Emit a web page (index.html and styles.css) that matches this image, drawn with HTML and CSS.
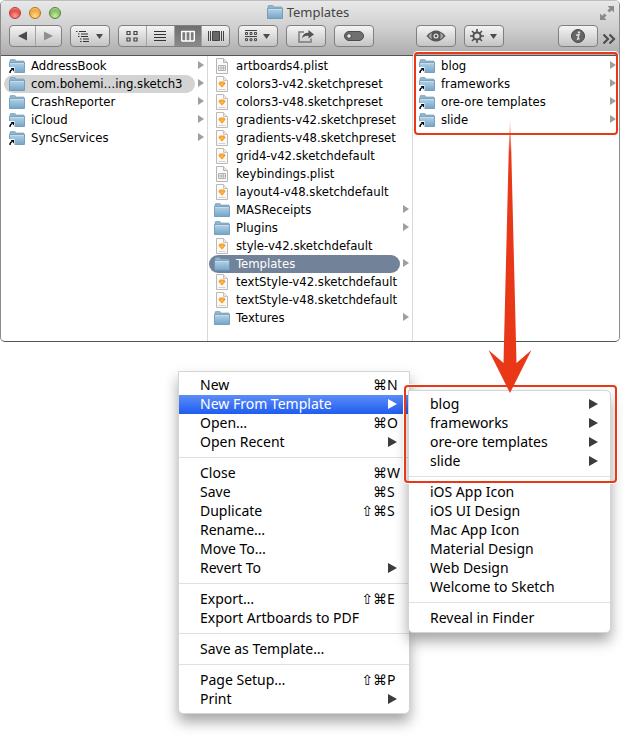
FILE: index.html
```html
<!DOCTYPE html>
<html lang="en">
<head>
    <meta charset="UTF-8">
    <meta name="viewport" content="width=device-width, initial-scale=1.0">
    <title>Templates</title>
    <link rel="stylesheet" href="styles.css">
</head>
<body>

<!-- Shared icons -->
<svg class="icon-defs" aria-hidden="true">
    <defs>
        <linearGradient id="folderFill" x1="0" y1="0" x2="0" y2="1">
            <stop offset="0" stop-color="#b4d3e8"/>
            <stop offset="1" stop-color="#74a5c8"/>
        </linearGradient>
        <linearGradient id="arrowFade" x1="0" y1="0" x2="0" y2="1">
            <stop offset="0" stop-color="#e83817" stop-opacity="0"/>
            <stop offset="0.12" stop-color="#e83817"/>
        </linearGradient>
        <symbol id="folder" viewBox="0 0 16 16">
            <path d="M1 4V2.5Q1 1.5 2 1.5H5.5Q6.5 1.5 6.5 2.5V3H14.5Q15.2 3 15.2 4V6H1Z" fill="#8fb6d1" stroke="#6d94b0" stroke-width="0.6"/>
            <path d="M0.5 4.6H15.5V14.5H0.5Z" fill="url(#folderFill)" stroke="#6791b0" stroke-width="0.8"/>
            <path d="M1 5.4H15" stroke="#cfe3f1" stroke-width="0.8"/>
        </symbol>
        <symbol id="folder-alias" viewBox="0 0 16 16">
            <use href="#folder"/>
            <path d="M0 9H5.5V16H0Z" fill="#fff"/>
            <path d="M1 15Q0.8 12.5 3 11.6" fill="none" stroke="#000" stroke-width="1.4"/>
            <path d="M1.6 10H5V13.6Z" fill="#000"/>
        </symbol>
        <symbol id="plist" viewBox="0 0 16 16">
            <path d="M2.5 0.5H9.5L13.5 4.5V15.5H2.5Z" fill="#fafafa" stroke="#b5b5b5"/>
            <path d="M9.5 0.5V4.5H13.5" fill="#e4e4e4" stroke="#b5b5b5"/>
            <path d="M4.5 7.5H11.5V12.5H4.5ZM4.5 10H11.5M7 7.5V12.5M9.3 7.5V12.5" fill="none" stroke="#b0b0b0"/>
        </symbol>
        <symbol id="sketch" viewBox="0 0 16 16">
            <path d="M2.5 0.5H9.5L13.5 4.5V15.5H2.5Z" fill="#fafafa" stroke="#b9b9b9"/>
            <path d="M9.5 0.5V4.5H13.5" fill="#e9e9e9" stroke="#c4c4c4"/>
            <path d="M5.8 5.5H10.2L11.7 7.6L8 11.8L4.3 7.6Z" fill="#f5a22d"/>
            <path d="M6.3 7.4H9.7L8 9.8Z" fill="#fbc467"/>
            <path d="M4.5 13.5H11.5" stroke="#d2d2d2"/>
        </symbol>
    </defs>
</svg>

<!-- Finder window -->
<section class="finder">
    <header class="finder-head">
        <div class="title-bar">
            <div class="lights">
                <button class="light red" aria-label="Close window"></button>
                <button class="light yellow" aria-label="Minimize"></button>
                <button class="light green" aria-label="Zoom"></button>
            </div>
            <h1 class="title"><svg class="icon"><use href="#folder"/></svg>Templates</h1>
            <button class="fullscreen" aria-label="Full screen">
                <svg width="16" height="16" viewBox="0 0 16 16">
                    <path d="M8.5 1H15V7.5L12.8 5.3L10.5 7.6L8.4 5.5L10.7 3.2ZM7.5 15H1V8.5L3.2 10.7L5.5 8.4L7.6 10.5L5.3 12.8Z" fill="#8a8a8a"/>
                </svg>
            </button>
        </div>
        <div class="toolbar">
            <div class="group nav">
                <button aria-label="Back"><svg width="9" height="10" viewBox="0 0 9 10"><path d="M9 0.5V9.5L0 5Z" fill="#4b4b4b"/></svg></button>
                <button aria-label="Forward"><svg width="9" height="10" viewBox="0 0 9 10"><path d="M0 0.5V9.5L9 5Z" fill="#8f8f8f"/></svg></button>
            </div>
            <div class="group">
                <button aria-label="Path">
                    <svg width="28" height="12" viewBox="0 0 28 12">
                        <path d="M0 1.5H1.5M3 1.5H10M2 4H3.5M5 4H12M2 6.5H3.5M5 6.5H12M4 9H5.5M7 9H13M4 11.5H5.5M7 11.5H13" stroke="#333" stroke-width="1"/>
                        <path d="M20 4H27L23.5 9Z" fill="#4b4b4b"/>
                    </svg>
                </button>
            </div>
            <div class="group views">
                <button aria-label="Icons">
                    <svg width="12" height="12" viewBox="0 0 12 12"><path d="M1 1.5H4V4.5H1ZM8 1.5H11V4.5H8ZM1 8H4V11H1ZM8 8H11V11H8Z" fill="none" stroke="#444" stroke-width="1.2"/></svg>
                </button>
                <button aria-label="List">
                    <svg width="12" height="12" viewBox="0 0 12 12"><path d="M0 1.5H12M0 4.5H12M0 7.5H12M0 10.5H12" stroke="#333"/></svg>
                </button>
                <button class="active" aria-label="Columns">
                    <svg width="14" height="12" viewBox="0 0 14 12"><path d="M0.7 1.5H13.3M0.7 11H13.3M0.7 1V11M4.9 1V11M9.1 1V11M13.3 1V11" fill="none" stroke="#fff" stroke-width="1.4"/></svg>
                </button>
                <button aria-label="Cover Flow">
                    <svg width="16" height="12" viewBox="0 0 16 12"><path d="M0.5 1V11M2.5 1V11M13.5 1V11M15.5 1V11" stroke="#444"/><path d="M4.5 1.5H11.5V10.5H4.5Z" fill="#666" stroke="#444"/></svg>
                </button>
            </div>
            <div class="group">
                <button aria-label="Arrange">
                    <svg width="26" height="12" viewBox="0 0 26 12">
                        <path d="M0 0.5H12M0 6.5H12" stroke="#444"/>
                        <path d="M0.5 2.5H2.5V4.5H0.5ZM5 2.5H7V4.5H5ZM9.5 2.5H11.5V4.5H9.5ZM0.5 8.7H2.5V10.7H0.5ZM5 8.7H7V10.7H5ZM9.5 8.7H11.5V10.7H9.5Z" fill="none" stroke="#444"/>
                        <path d="M18 4H25L21.5 9Z" fill="#4b4b4b"/>
                    </svg>
                </button>
            </div>
            <div class="group">
                <button aria-label="Share">
                    <svg width="16" height="14" viewBox="0 0 16 14">
                        <path d="M6 3H1V13H13V9.5" fill="none" stroke="#7b7b7b" stroke-width="1.5"/>
                        <path d="M4 9.5Q4.5 3.7 10.5 3.7V1L16 5.4L10.5 9.4V6.8Q6 6.5 4 9.5Z" fill="#555"/>
                    </svg>
                </button>
            </div>
            <div class="group">
                <button aria-label="Tags">
                    <svg width="20" height="10" viewBox="0 0 20 10">
                        <rect x="0.5" y="0.5" width="19" height="9" rx="4.5" fill="#707070" stroke="#4b4b4b"/>
                        <circle cx="5" cy="5" r="2.3" fill="#eee" stroke="#4b4b4b"/>
                    </svg>
                </button>
            </div>
            <div class="group quick-look">
                <button aria-label="Quick Look">
                    <svg width="20" height="12" viewBox="0 0 20 12">
                        <path d="M0.5 6Q10 -5 19.5 6Q10 17 0.5 6Z" fill="#555"/>
                        <path d="M2.5 6Q4 3.8 6 2.8Q4.6 6 6 9.2Q4 8.2 2.5 6ZM17.5 6Q16 3.8 14 2.8Q15.4 6 14 9.2Q16 8.2 17.5 6Z" fill="#a9a9a9"/>
                        <circle cx="10" cy="6" r="2.6" fill="#d8d8d8"/>
                        <circle cx="10" cy="6" r="1.3" fill="#555"/>
                    </svg>
                </button>
            </div>
            <div class="group">
                <button aria-label="Action">
                    <svg width="28" height="14" viewBox="0 0 28 14">
                        <circle cx="7" cy="7" r="3.6" fill="none" stroke="#505050" stroke-width="2"/>
                        <path d="M7 0V3M7 11V14M0 7H3M11 7H14M2 2L4.2 4.2M9.8 9.8L12 12M12 2L9.8 4.2M4.2 9.8L2 12" stroke="#505050" stroke-width="1.6"/>
                        <path d="M20 5H27L23.5 10Z" fill="#4b4b4b"/>
                    </svg>
                </button>
            </div>
            <div class="group info">
                <button aria-label="Get Info">
                    <svg width="14" height="14" viewBox="0 0 14 14">
                        <circle cx="7" cy="7" r="6.5" fill="#656565" stroke="#4a4a4a"/>
                        <circle cx="8" cy="3.4" r="1.2" fill="#ddd"/>
                        <path d="M5 6.2L8 5.6L6.6 10.2L8.6 9.6" fill="none" stroke="#ddd" stroke-width="1.4"/>
                    </svg>
                </button>
            </div>
            <button class="more" aria-label="More">
                <svg width="14" height="10" viewBox="0 0 14 10"><path d="M1.5 0.5L6 5L1.5 9.5M7.5 0.5L12 5L7.5 9.5" fill="none" stroke="#4f4f4f" stroke-width="2.2"/></svg>
            </button>
        </div>
    </header>

    <div class="columns">
        <ul class="column">
            <li class="has-children"><a href="#"><svg class="icon"><use href="#folder-alias"/></svg>AddressBook</a></li>
            <li class="has-children open"><a href="#"><svg class="icon"><use href="#folder"/></svg>com.bohemi…ing.sketch3</a></li>
            <li class="has-children"><a href="#"><svg class="icon"><use href="#folder"/></svg>CrashReporter</a></li>
            <li class="has-children"><a href="#"><svg class="icon"><use href="#folder-alias"/></svg>iCloud</a></li>
            <li class="has-children"><a href="#"><svg class="icon"><use href="#folder-alias"/></svg>SyncServices</a></li>
        </ul>
        <ul class="column">
            <li><a href="#"><svg class="icon"><use href="#plist"/></svg>artboards4.plist</a></li>
            <li><a href="#"><svg class="icon"><use href="#sketch"/></svg>colors3-v42.sketchpreset</a></li>
            <li><a href="#"><svg class="icon"><use href="#sketch"/></svg>colors3-v48.sketchpreset</a></li>
            <li><a href="#"><svg class="icon"><use href="#sketch"/></svg>gradients-v42.sketchpreset</a></li>
            <li><a href="#"><svg class="icon"><use href="#sketch"/></svg>gradients-v48.sketchpreset</a></li>
            <li><a href="#"><svg class="icon"><use href="#sketch"/></svg>grid4-v42.sketchdefault</a></li>
            <li><a href="#"><svg class="icon"><use href="#plist"/></svg>keybindings.plist</a></li>
            <li><a href="#"><svg class="icon"><use href="#sketch"/></svg>layout4-v48.sketchdefault</a></li>
            <li class="has-children"><a href="#"><svg class="icon"><use href="#folder"/></svg>MASReceipts</a></li>
            <li class="has-children"><a href="#"><svg class="icon"><use href="#folder"/></svg>Plugins</a></li>
            <li><a href="#"><svg class="icon"><use href="#sketch"/></svg>style-v42.sketchdefault</a></li>
            <li class="has-children selected"><a href="#"><svg class="icon"><use href="#folder"/></svg>Templates</a></li>
            <li><a href="#"><svg class="icon"><use href="#sketch"/></svg>textStyle-v42.sketchdefault</a></li>
            <li><a href="#"><svg class="icon"><use href="#sketch"/></svg>textStyle-v48.sketchdefault</a></li>
            <li class="has-children"><a href="#"><svg class="icon"><use href="#folder"/></svg>Textures</a></li>
        </ul>
        <div class="column last">
            <ul class="marked">
                <li class="has-children"><a href="#"><svg class="icon"><use href="#folder-alias"/></svg>blog</a></li>
                <li class="has-children"><a href="#"><svg class="icon"><use href="#folder-alias"/></svg>frameworks</a></li>
                <li class="has-children"><a href="#"><svg class="icon"><use href="#folder-alias"/></svg>ore-ore templates</a></li>
                <li class="has-children"><a href="#"><svg class="icon"><use href="#folder-alias"/></svg>slide</a></li>
            </ul>
            <!-- Arrow from the folder list to the submenu -->
            <svg class="arrow" width="44" height="274" viewBox="0 0 44 274" aria-hidden="true">
                <path d="M21.5 0H22.5L28.5 243L43.5 230L22 273L0.5 230L15.5 243Z" fill="url(#arrowFade)"/>
            </svg>
        </div>
    </div>
</section>

<!-- File menu -->
<nav class="menu file-menu">
    <ul>
        <li><button>New <kbd>⌘<b>N</b></kbd></button></li>
        <li class="current">
            <button class="more-items">New From Template</button>
            <div class="menu submenu">
                <ul class="marked">
                    <li><button class="more-items">blog</button></li>
                    <li><button class="more-items">frameworks</button></li>
                    <li><button class="more-items">ore-ore templates</button></li>
                    <li><button class="more-items">slide</button></li>
                </ul>
                <ul>
                    <li><button>iOS App Icon</button></li>
                    <li><button>iOS UI Design</button></li>
                    <li><button>Mac App Icon</button></li>
                    <li><button>Material Design</button></li>
                    <li><button>Web Design</button></li>
                    <li><button>Welcome to Sketch</button></li>
                </ul>
                <ul>
                    <li><button>Reveal in Finder</button></li>
                </ul>
            </div>
        </li>
        <li><button>Open… <kbd>⌘<b>O</b></kbd></button></li>
        <li><button class="more-items">Open Recent</button></li>
    </ul>
    <ul>
        <li><button>Close <kbd>⌘<b>W</b></kbd></button></li>
        <li><button>Save <kbd>⌘<b>S</b></kbd></button></li>
        <li><button>Duplicate <kbd>⇧⌘<b>S</b></kbd></button></li>
        <li><button>Rename…</button></li>
        <li><button>Move To…</button></li>
        <li><button class="more-items">Revert To</button></li>
    </ul>
    <ul>
        <li><button>Export… <kbd>⇧⌘<b>E</b></kbd></button></li>
        <li><button>Export Artboards to PDF</button></li>
    </ul>
    <ul>
        <li><button>Save as Template…</button></li>
    </ul>
    <ul>
        <li><button>Page Setup… <kbd>⇧⌘<b>P</b></kbd></button></li>
        <li><button class="more-items">Print</button></li>
    </ul>
</nav>

</body>
</html>
```

FILE: styles.css
```css
/* General */
* {
    box-sizing: border-box;
}

body {
    margin: 0;
    background-color: #fff;
    color: #000;
    font-family: "Lucida Grande", "Noto Sans", "Open Sans", sans-serif;
    font-size: 13px;
}

ul {
    list-style: none;
    margin: 0;
    padding: 0;
}

button {
    border: none;
    padding: 0;
    background: none;
    color: inherit;
    font: inherit;
}

a {
    color: inherit;
    text-decoration: none;
}

.icon-defs {
    display: block;
    width: 0;
    height: 0;
}

.icon {
    width: 16px;
    height: 16px;
    flex: none;
}

/* Finder window */
.finder {
    margin-right: 4px;
    border: 1px solid #8c8c8c;
    border-top-color: #bdbdbd;
    border-bottom-color: #555;
    border-radius: 5px;
    background-color: #fff;
}

.finder-head {
    height: 55px;
    border-bottom: 1px solid #555;
    border-radius: 4px 4px 0 0;
    background: linear-gradient(#e8e8e8, #cfcfcf 50%, #adadad);
}

.title-bar {
    display: grid;
    grid-template-columns: 1fr auto 1fr;
    align-items: center;
    height: 23px;
    padding: 0 4px 0 0;
}

.lights {
    display: flex;
    gap: 8px;
    margin-left: 8px;
}

.light {
    width: 12px;
    height: 12px;
    border: 1px solid #777;
    border-radius: 50%;
}

.light.red {
    border-color: #a5423c;
    background: radial-gradient(circle at 50% 80%, #ff9c92, #e8493f 60%, #f7b5ae);
}

.light.yellow {
    border-color: #a9742c;
    background: radial-gradient(circle at 50% 80%, #ffdc8a, #f0a63a 60%, #fbdcaa);
}

.light.green {
    border-color: #557f3b;
    background: radial-gradient(circle at 50% 80%, #c5eea0, #7fbd5c 60%, #cfe8bd);
}

.title {
    display: flex;
    align-items: center;
    gap: 4px;
    margin: 0;
    padding-bottom: 1px;
    color: #444;
    font-size: 13px;
    font-weight: normal;
    line-height: 18px;
}

.fullscreen {
    justify-self: end;
    height: 16px;
}

.toolbar {
    display: flex;
    gap: 8px;
    padding: 1px 3px 0 8px;
}

.group {
    display: flex;
    width: 40px;
    height: 22px;
    border: 1px solid #808080;
    border-radius: 4px;
    background: linear-gradient(#f4f4f4, #c4c4c4);
    overflow: hidden;
}

.group button {
    display: flex;
    flex: 1;
    align-items: center;
    justify-content: center;
}

.group button + button {
    border-left: 1px solid #a2a2a2;
}

.nav {
    width: 53px;
}

.views {
    width: 112px;
}

.group .active {
    background: linear-gradient(#6f6f6f, #8a8a8a);
}

.quick-look {
    margin-left: 34px;
}

.info {
    margin-left: auto;
}

.more {
    display: flex;
    align-items: center;
    margin-left: -4px;
    padding-top: 6px;
}

/* Column view */
.columns {
    display: grid;
    grid-template-columns: 207px 205px 1fr;
    height: 285px;
    font-family: "Lucida Grande", "DejaVu Sans Condensed", "Noto Sans", sans-serif;
}

.column {
    padding: 1px 3px 0 0;
    border-right: 1px solid #d9d9d9;
}

.column:first-child {
    padding-left: 2px;
}

.column.last {
    position: relative;
    border-right: none;
}

.column li {
    display: flex;
    align-items: center;
    height: 18px;
    padding: 0 10px 0 1px;
}

.column a {
    display: flex;
    flex: 1;
    align-items: center;
    gap: 6px;
    height: 18px;
    padding-left: 5px;
    border-radius: 9px;
    line-height: 18px;
    white-space: nowrap;
}

.column .has-children {
    padding-right: 0;
}

.has-children::after {
    content: "";
    width: 0;
    margin: 0 0 3px 3px;
    border: solid transparent;
    border-width: 4px 0 4px 6px;
    border-left-color: #9f9f9f;
}

.open a {
    background-color: #d3d3d3;
}

.selected a {
    background-color: #718299;
    color: #fff;
}

/* Red callout frames */
.marked {
    position: relative;
}

.marked::after {
    content: "";
    position: absolute;
    inset: -5px -2px -6px 1px;
    border: 2px solid #e83817;
    border-radius: 4px;
    box-shadow: 0 0 0 1px #fff;
    pointer-events: none;
}

.arrow {
    position: absolute;
    top: 64px;
    left: 75px;
    z-index: 3;
}

/* Menus */
.menu {
    padding: 4px 0;
    border: 1px solid #d4d4d4;
    border-radius: 0 0 5px 5px;
    background-color: #fff;
    box-shadow: 0 8px 14px rgba(0, 0, 0, 0.35);
    font-size: 14px;
}

.file-menu {
    width: 232px;
    margin: 29px 0 22px 178px;
}

.menu ul + ul {
    margin-top: 5px;
    padding-top: 6px;
    border-top: 1px solid #e0e0e0;
}

.menu li {
    position: relative;
}

.menu li > button {
    display: flex;
    align-items: center;
    justify-content: space-between;
    width: 100%;
    height: 19px;
    padding: 0 8px 2px 21px;
    line-height: 17px;
    white-space: nowrap;
}

.menu kbd {
    display: flex;
    font-family: "Noto Sans", "DejaVu Sans", sans-serif;
}

.menu b {
    width: 14px;
    font-weight: normal;
    text-align: left;
}

.menu .more-items::after {
    content: "";
    margin-right: 4px;
    border: solid transparent;
    border-width: 5px 0 5px 9px;
    border-left-color: #3c3c3c;
}

.menu .current > button {
    background: linear-gradient(#5c8df8, #1f5cf0);
    color: #fff;
}

.menu .current > .more-items::after {
    border-left-color: #fff;
}

.submenu {
    position: absolute;
    top: -5px;
    left: calc(100% - 1px);
    z-index: 2;
    width: 203px;
    border-radius: 0 5px 5px 5px;
}

.submenu .marked::after {
    inset: -10px -7px -12px -5px;
}
```
